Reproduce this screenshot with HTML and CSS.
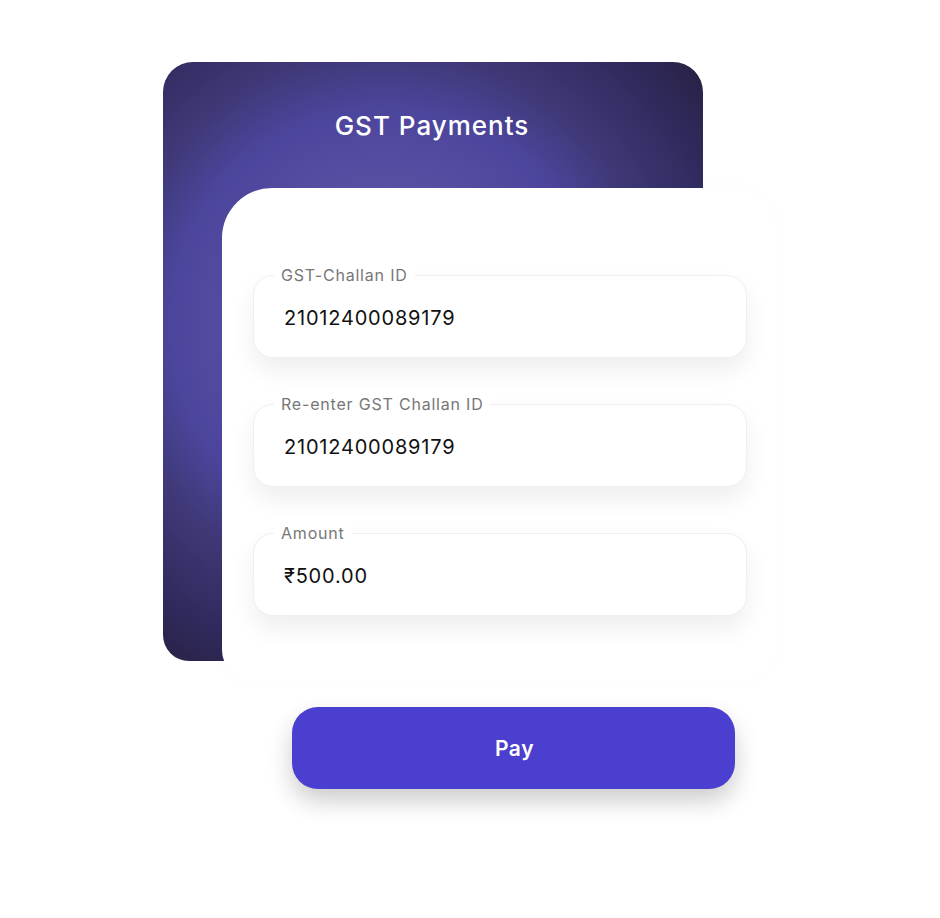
FILE: index.html
```html
<!DOCTYPE html>
<html>
<head>
<meta charset="utf-8">
<link rel="stylesheet" href="styles.css">
</head>
<body>
<div class="stage">
  <div class="hero">
    <h1 class="hero-title">GST Payments</h1>
  </div>
  <div class="form-card">
    <div class="field">
      <span class="field-label">GST-Challan ID</span>
      <span class="field-value">21012400089179</span>
    </div>
    <div class="field">
      <span class="field-label">Re-enter GST Challan ID</span>
      <span class="field-value">21012400089179</span>
    </div>
    <div class="field">
      <span class="field-label">Amount</span>
      <span class="field-value">₹500.00</span>
    </div>
  </div>
</div>
<button class="pay-btn">Pay</button>
</body>
</html>
```
FILE: styles.css
```css
html, body {
  margin: 0;
  padding: 0;
  background: #ffffff;
}
body {
  width: 940px;
  height: 918px;
  overflow: hidden;
  font-family: Inter, "Noto Sans", sans-serif;
}
.stage {
  display: grid;
  margin-left: 163px;
  margin-top: 62px;
  width: 612px;
}
.hero {
  grid-area: 1 / 1;
  width: 540px;
  height: 599px;
  border-radius: 30px 30px 26px 26px;
  background: radial-gradient(circle 430px at 222px 262px, #6660a8 0%, #5951a3 30%, #4c459c 50%, #3e3876 64%, #2f2a5c 82%, #261e3a 100%);
}
.hero-title {
  margin: 49px 0 0;
  text-align: center;
  color: #ffffff;
  font-size: 26px;
  font-weight: 500;
  letter-spacing: 1px;
  line-height: 30px;
  padding-left: 0;
  padding-right: 2px;
}
.form-card {
  grid-area: 1 / 1;
  margin-left: 59px;
  margin-top: 126px;
  width: 553px;
  height: 492px;
  box-sizing: border-box;
  padding: 87px 28px 0 31px;
  background: #ffffff;
  border-radius: 50px 40px 30px 30px;
  box-shadow: 0 0 24px rgba(0, 0, 0, 0.015);
  display: flex;
  flex-direction: column;
  gap: 46px;
}
.field {
  position: relative;
  height: 83px;
  box-sizing: border-box;
  border: 1px solid #efefef;
  border-radius: 20px;
  background: #ffffff;
  box-shadow: 0 12px 24px rgba(0, 0, 0, 0.07);
  display: flex;
  align-items: center;
  padding-left: 30px;
}
.field-label {
  position: absolute;
  left: 20px;
  top: -11px;
  padding: 0 7px;
  background: #ffffff;
  color: #777777;
  font-size: 16px;
  letter-spacing: 0.8px;
  line-height: 20px;
}
.field-value {
  color: #111111;
  font-size: 20px;
  letter-spacing: 0.8px;
  line-height: 24px;
  margin-top: 2px;
}
.pay-btn {
  display: block;
  margin: 27px 0 0 292px;
  width: 443px;
  height: 82px;
  border: none;
  border-radius: 26px;
  background: #4b3fcf;
  color: #ffffff;
  font-family: Inter, "Noto Sans", sans-serif;
  font-size: 21px;
  font-weight: 600;
  letter-spacing: 0.6px;
  padding-left: 8px;
  box-shadow: 0 12px 24px rgba(0, 0, 0, 0.2);
}
```
